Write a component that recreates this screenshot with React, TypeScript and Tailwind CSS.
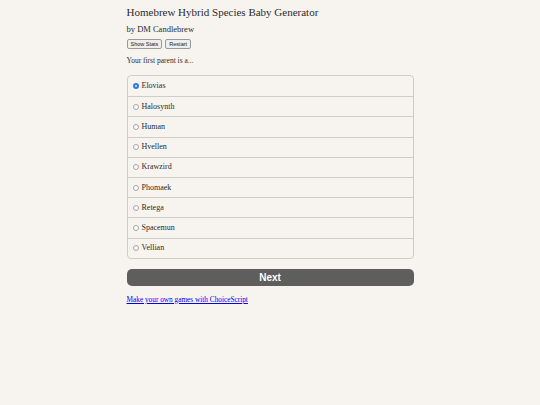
import * as React from "react"

const species = [
  "Elovias",
  "Halosynth",
  "Human",
  "Hvellen",
  "Krawzird",
  "Phomaek",
  "Retega",
  "Spacemun",
  "Vellian",
]

export default function App() {
  const [choice, setChoice] = React.useState("Elovias")

  return (
    <div className="min-h-[405px] bg-[#f7f4f0] font-['Liberation_Serif',serif] text-[#2a2a2a]">
      <div className="mx-auto w-[287px] pt-[5px]">
        <h1 className="text-[11px] leading-[14px] text-[#2b2b2b]">
          Homebrew Hybrid Species Baby Generator
        </h1>
        <p className="mt-[5px] text-[8.5px] leading-[10px]">by DM Candlebrew</p>
        <div className="mt-[5px] flex gap-[3px]">
          <button className="rounded-[2px] border border-[#999] bg-[#eeeeec] px-[3px] font-['Liberation_Sans',sans-serif] text-[5.5px] leading-[8px] text-[#222]">
            Show Stats
          </button>
          <button className="rounded-[2px] border border-[#999] bg-[#eeeeec] px-[3px] font-['Liberation_Sans',sans-serif] text-[5.5px] leading-[8px] text-[#222]">
            Restart
          </button>
        </div>
        <p className="mt-[7px] text-[7.5px] leading-[10px]">Your first parent is a...</p>

        <div className="mt-[9px] overflow-hidden rounded-[4px] border border-[#cfcccb]">
          {species.map((s, i) => (
            <label
              key={s}
              onClick={() => setChoice(s)}
              className={`flex h-[20.2px] cursor-pointer items-center gap-[3px] pl-[5px] text-[8px] ${
                i > 0 ? "border-t border-[#cfcccb]" : ""
              }`}
            >
              {choice === s ? (
                <span className="flex h-[6px] w-[6px] items-center justify-center rounded-full bg-[#2f7de1]">
                  <span className="h-[2px] w-[2px] rounded-full bg-[#d6e6fb]" />
                </span>
              ) : (
                <span className="h-[6px] w-[6px] rounded-full border border-[#a3a3a3] bg-white" />
              )}
              {s}
            </label>
          ))}
        </div>

        <button className="mt-[10px] flex h-[17px] w-full items-center justify-center rounded-[5px] bg-[#5e5e5c] font-['Liberation_Sans',sans-serif] text-[10px] font-bold text-white">
          Next
        </button>

        <a
          href="#"
          className="mt-[9px] block text-[7.3px] leading-[9px] text-[#0000ee] underline"
        >
          Make your own games with ChoiceScript
        </a>
      </div>
    </div>
  )
}
